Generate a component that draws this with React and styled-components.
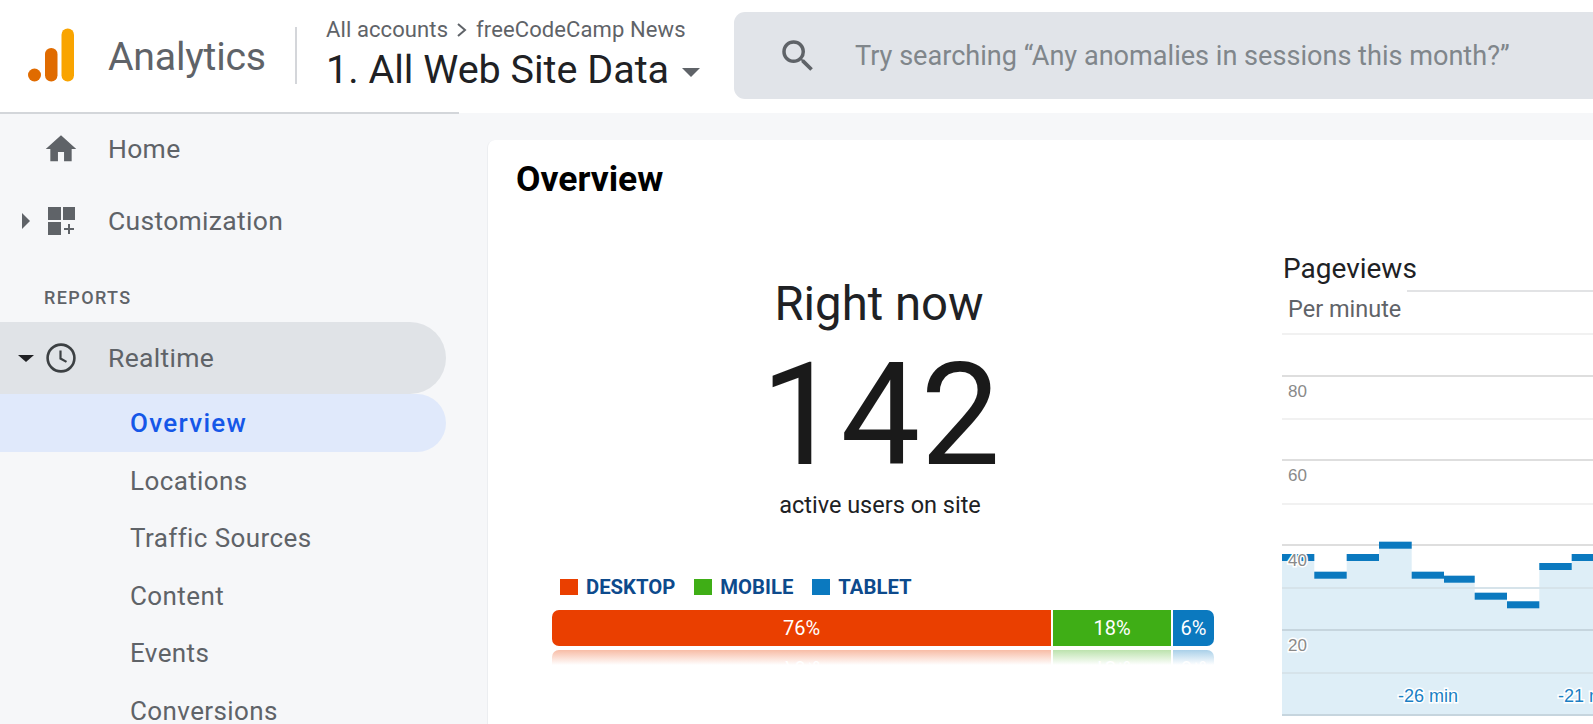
import React from 'react';
import styled, { createGlobalStyle } from 'styled-components';

const GlobalStyle = createGlobalStyle`
  html, body { margin: 0; padding: 0; height: 100%; background: #f6f7f9; }
  body { font-family: Roboto, "Liberation Sans", sans-serif; overflow: hidden; }
`;

const Page = styled.div`
  width: 1593px;
  height: 724px;
  overflow: hidden;
  display: flex;
  flex-direction: column;
`;

const Header = styled.header`
  height: 113px;
  flex: none;
  background: #fff;
  display: flex;
  position: relative;
`;

const HeaderRule = styled.div`
  position: absolute;
  left: 0;
  bottom: -1px;
  width: 459px;
  height: 2px;
  background: #d3d6da;
`;

const LogoBox = styled.div`
  width: 108px;
  flex: none;
  padding: 28px 0 0 28px;
  box-sizing: border-box;
`;

const Brand = styled.div`
  width: 187px;
  flex: none;
  height: 57px;
  margin-top: 27px;
  border-right: 2px solid #d4d6da;
  color: #5f6368;
  font-size: 39.2px;
  line-height: 60px;
  letter-spacing: -0.2px;
`;

const Account = styled.div`
  width: 437px;
  flex: none;
  padding: 16px 0 0 29px;
  box-sizing: border-box;
`;

const Crumbs = styled.div`
  display: flex;
  align-items: center;
  gap: 8px;
  color: #5f6368;
  font-size: 22px;
  line-height: 28px;
  letter-spacing: 0.1px;
`;

const ViewName = styled.div`
  display: flex;
  align-items: center;
  gap: 13px;
  color: #202124;
  font-size: 39.5px;
  line-height: 50px;
  margin-top: 1px;
`;

const Caret = styled.span`
  width: 0;
  height: 0;
  border-left: 9px solid transparent;
  border-right: 9px solid transparent;
  border-top: 9px solid #5f6368;
  margin-top: 4px;
`;

const Search = styled.div`
  flex: 1;
  height: 87px;
  margin-top: 12px;
  background: #e1e4e9;
  border-radius: 11px 0 0 11px;
  display: flex;
  align-items: center;
  padding-left: 43px;
  gap: 36px;
  color: #80868b;
  font-size: 27.1px;
  white-space: nowrap;
`;

const Body = styled.div`
  flex: 1;
  display: flex;
  min-height: 0;
`;

const Sidebar = styled.nav`
  width: 487px;
  flex: none;
`;

const NavRow = styled.div`
  width: 446px;
  height: 72px;
  padding: 0 0 2px 108px;
  display: flex;
  align-items: center;
  position: relative;
  box-sizing: border-box;
  color: #5f6368;
  font-size: 26.5px;
  font-weight: 400;
  letter-spacing: 0.3px;
  background: ${p => (p.$active ? '#e0e3e7' : 'transparent')};
  border-radius: 0 36px 36px 0;
`;

const NavIcon = styled.span`
  position: absolute;
  left: 45px;
  top: 50%;
  transform: translateY(-50%);
  width: 32px;
  height: 32px;
  display: flex;
`;

const NavArrow = styled.span`
  position: absolute;
  left: ${p => (p.$open ? '18px' : '22px')};
  top: 50%;
  margin-top: ${p => (p.$open ? '-3px' : '-8px')};
  width: 0;
  height: 0;
  ${p => p.$open
    ? 'border-left: 8px solid transparent; border-right: 8px solid transparent; border-top: 7px solid #202124;'
    : 'border-top: 8px solid transparent; border-bottom: 8px solid transparent; border-left: 8px solid #5f6368;'}
`;

const SectionLabel = styled.div`
  height: 65px;
  padding: 27px 0 0 44px;
  box-sizing: border-box;
  color: #5f6368;
  font-size: 18px;
  font-weight: 500;
  line-height: 28px;
  letter-spacing: 1.4px;
`;

const SubRow = styled.div`
  width: 446px;
  height: 57.5px;
  padding: 1px 0 0 130px;
  display: flex;
  align-items: center;
  box-sizing: border-box;
  font-size: 26px;
  font-weight: ${p => (p.$active ? 500 : 400)};
  letter-spacing: ${p => (p.$active ? '1.3px' : '0.4px')};
  color: ${p => (p.$active ? '#1557e8' : '#5f6368')};
  background: ${p => (p.$active ? '#e0e9fb' : 'transparent')};
  border-radius: 0 29px 29px 0;
`;

const Main = styled.main`
  flex: 1;
  min-width: 0;
  padding-top: 27px;
`;

const Card = styled.section`
  height: 100%;
  background: #fff;
  border-left: 1px solid #eceef1;
  border-radius: 8px 0 0 0;
  box-sizing: border-box;
`;

const Title = styled.h1`
  margin: 0;
  padding: 19px 0 0 28px;
  font-size: 35.5px;
  line-height: 40px;
  font-weight: 700;
  color: #000;
`;

const Columns = styled.div`
  display: flex;
`;

const LeftCol = styled.div`
  width: 794px;
  flex: none;
  padding-top: 77px;
  display: flex;
  flex-direction: column;
  align-items: center;
`;

const RightNow = styled.div`
  font-size: 47.3px;
  line-height: 56px;
  color: #202124;
  font-weight: 400;
  margin-left: -12px;
`;

const BigCount = styled.div`
  margin: 19px 0 0 -9px;
  font-size: 142px;
  line-height: 130px;
  font-weight: 400;
  color: #1a1a1a;
`;

const ActiveUsers = styled.div`
  margin: 9px 0 0 -10px;
  font-size: 23.5px;
  line-height: 30px;
  color: #202124;
`;

const Devices = styled.div`
  align-self: flex-start;
  margin: 55px 0 0 64px;
  width: 662px;
`;

const Legend = styled.div`
  display: flex;
  height: 24px;
  padding-left: 8px;
`;

const LegendItem = styled.div`
  display: flex;
  align-items: center;
  gap: 8px;
  margin-right: 19px;
  font-size: 20.3px;
  font-weight: 700;
  color: #0d4a8c;
`;

const Swatch = styled.span`
  width: 18px;
  height: 16px;
  background: ${p => p.$color};
`;

const Bar = styled.div`
  display: flex;
  gap: 2px;
  height: 36px;
  margin-top: 11px;
  border-radius: 7px;
  overflow: hidden;
`;

const Segment = styled.div`
  background: ${p => p.$color};
  color: #fff;
  font-size: 20px;
  display: flex;
  align-items: center;
  justify-content: center;
`;

const Reflection = styled.div`
  display: flex;
  gap: 2px;
  height: 15px;
  margin-top: 4px;
  border-radius: 7px 7px 0 0;
  overflow: hidden;
`;

const MirrorSegment = styled.div`
  background: linear-gradient(${p => p.$color}59, #ffffff);
  overflow: hidden;
`;

const MirrorLabel = styled.div`
  color: #fff;
  font-size: 20px;
  line-height: 36px;
  text-align: center;
  transform: scaleY(-1);
`;

const RightCol = styled.div`
  flex: 1;
  min-width: 0;
  padding-top: 54px;
`;

const ChartHead = styled.div`
  display: flex;
  height: 39px;
`;

const ChartTitle = styled.div`
  font-size: 28px;
  line-height: 32px;
  color: #202124;
  padding-left: 1px;
`;

const ChartRule = styled.div`
  flex: 1;
  align-self: flex-end;
  height: 2px;
  margin-left: -10px;
  background: #e2e3e5;
`;

const ChartSub = styled.div`
  margin-top: 4px;
  padding-left: 6px;
  font-size: 23.5px;
  line-height: 26px;
  color: #5f6368;
`;

const ChartSvg = styled.svg`
  display: block;
  margin-top: 11px;
`;

const AxisLabel = styled.text`
  font-family: "Liberation Sans", Arial, sans-serif;
  font-size: ${p => (p.$time ? '18px' : '17px')};
  fill: ${p => (p.$time ? '#1b7fc4' : '#8a8a8a')};
  paint-order: stroke;
  stroke: ${p => (p.$halo ? '#ffffff' : 'none')};
  stroke-width: ${p => (p.$halo ? '3px' : '0')};
`;

const Logo = () => (
  <svg width="46" height="54" viewBox="0 0 46 54">
    <rect x="33.5" y="0.5" width="12.5" height="53" rx="6.2" fill="#f9a400" />
    <rect x="17" y="20" width="12.5" height="33.5" rx="6.2" fill="#e06b00" />
    <circle cx="6.5" cy="47" r="6.5" fill="#e06b00" />
  </svg>
);

const SearchIcon = () => (
  <svg width="42" height="42" viewBox="0 0 24 24" fill="#5f6368">
    <path d="M15.5 14h-.79l-.28-.27A6.47 6.47 0 0 0 16 9.5 6.5 6.5 0 1 0 9.5 16c1.61 0 3.09-.59 4.23-1.57l.27.28v.79l5 4.99L20.49 19l-4.99-5zm-6 0C7.01 14 5 11.99 5 9.5S7.01 5 9.5 5 14 7.01 14 9.5 11.99 14 9.5 14z" />
  </svg>
);

const HomeIcon = () => (
  <svg width="32" height="32" viewBox="1.5 2 21 20" fill="#5f6368">
    <path d="M10 20v-6h4v6h5v-8h3L12 3 2 12h3v8z" />
  </svg>
);

const CustomizeIcon = () => (
  <svg width="32" height="32" viewBox="0 0 32 32" fill="#5f6368">
    <rect x="3" y="2" width="13" height="13" />
    <rect x="18" y="2" width="12" height="13" />
    <rect x="3" y="17" width="13" height="13" />
    <path d="M23 19h2v4h4v2h-4v4h-2v-4h-4v-2h4z" />
  </svg>
);

const ClockIcon = () => (
  <svg width="32" height="32" viewBox="0 0 32 32" fill="none" stroke="#3c4043" strokeWidth="2.6">
    <circle cx="16" cy="16" r="13.4" />
    <path d="M15.5 8.5v8l6 3.4" strokeWidth="2.2" />
  </svg>
);

const Chevron = () => (
  <svg width="12" height="18" viewBox="0 0 12 18" fill="none" stroke="#5f6368" strokeWidth="2">
    <path d="M2 3l7 6-7 6" />
  </svg>
);

const subItems = ['Overview', 'Locations', 'Traffic Sources', 'Content', 'Events', 'Conversions'];

const devices = [
  { name: 'DESKTOP', short: '76%', color: '#ea3f00', width: 499 },
  { name: 'MOBILE', short: '18%', color: '#3fae16', width: 118 },
  { name: 'TABLET', short: '6%', color: '#0b79bf', width: 41 },
];

// chart is drawn in page coordinates shifted by this offset
const OFF = 333;
const LEFT = 1282;
const steps = [
  [1282, 554], [1314.3, 571.7], [1346.7, 554], [1379, 541.7], [1411.7, 571.7],
  [1444, 575.7], [1474.7, 592.7], [1507, 601.3], [1539.3, 563], [1571.7, 554],
];
const END = 1593;
const BOTTOM = 715;

const areaPath = () => {
  let d = `M0 ${BOTTOM - OFF}`;
  steps.forEach(([x, y], i) => {
    const next = i + 1 < steps.length ? steps[i + 1][0] : END;
    d += ` L${x - LEFT} ${y - OFF} L${next - LEFT} ${y - OFF}`;
  });
  return `${d} L${END - LEFT} ${BOTTOM - OFF} Z`;
};

const gridLines = [
  [334, '#f1f1f1'], [376, '#dedede'], [419, '#f1f1f1'], [460, '#dedede'], [504, '#f1f1f1'],
  [545, '#dedede'], [588, '#d6e3ea'], [630, '#c6d5de'], [673, '#d6e3ea'], [715, '#c6d5de'],
];

const yLabels = [
  ['80', 397, false], ['60', 481, false], ['40', 566, true], ['20', 651, true],
];

const PageviewsChart = () => (
  <ChartSvg width="311" height="391" viewBox="0 0 311 391">
    <path d={areaPath()} fill="#deeef7" />
    {gridLines.map(([y, color]) => (
      <rect key={y} x="0" y={y - OFF - 1} width="311" height="2" fill={color} />
    ))}
    {steps.map(([x, y], i) => {
      const next = i + 1 < steps.length ? steps[i + 1][0] : END;
      return <rect key={x} x={x - LEFT} y={y - OFF} width={next - x} height="7" fill="#0b79bf" />;
    })}
    {yLabels.map(([text, y, halo]) => (
      <AxisLabel key={text} x="6" y={y - OFF} $halo={halo}>{text}</AxisLabel>
    ))}
    <AxisLabel x={1398 - LEFT} y={702 - OFF} $time $halo>-26 min</AxisLabel>
    <AxisLabel x={1558 - LEFT} y={702 - OFF} $time $halo>-21 min</AxisLabel>
  </ChartSvg>
);

const App = () => (
  <Page>
    <GlobalStyle />
    <Header>
      <LogoBox><Logo /></LogoBox>
      <Brand>Analytics</Brand>
      <Account>
        <Crumbs>All accounts <Chevron /> freeCodeCamp News</Crumbs>
        <ViewName>1. All Web Site Data <Caret /></ViewName>
      </Account>
      <Search>
        <SearchIcon />
        Try searching “Any anomalies in sessions this month?”
      </Search>
      <HeaderRule />
    </Header>
    <Body>
      <Sidebar>
        <NavRow>
          <NavIcon><HomeIcon /></NavIcon>
          Home
        </NavRow>
        <NavRow>
          <NavArrow />
          <NavIcon><CustomizeIcon /></NavIcon>
          Customization
        </NavRow>
        <SectionLabel>REPORTS</SectionLabel>
        <NavRow $active>
          <NavArrow $open />
          <NavIcon><ClockIcon /></NavIcon>
          Realtime
        </NavRow>
        {subItems.map((item, i) => (
          <SubRow key={item} $active={i === 0}>{item}</SubRow>
        ))}
      </Sidebar>
      <Main>
        <Card>
          <Title>Overview</Title>
          <Columns>
            <LeftCol>
              <RightNow>Right now</RightNow>
              <BigCount>142</BigCount>
              <ActiveUsers>active users on site</ActiveUsers>
              <Devices>
                <Legend>
                  {devices.map(d => (
                    <LegendItem key={d.name}>
                      <Swatch $color={d.color} />
                      {d.name}
                    </LegendItem>
                  ))}
                </Legend>
                <Bar>
                  {devices.map(d => (
                    <Segment key={d.name} $color={d.color} style={{ width: d.width }}>{d.short}</Segment>
                  ))}
                </Bar>
                <Reflection>
                  {devices.map(d => (
                    <MirrorSegment key={d.name} $color={d.color} style={{ width: d.width }}>
                      <MirrorLabel aria-hidden="true">{d.short}</MirrorLabel>
                    </MirrorSegment>
                  ))}
                </Reflection>
              </Devices>
            </LeftCol>
            <RightCol>
              <ChartHead>
                <ChartTitle>Pageviews</ChartTitle>
                <ChartRule />
              </ChartHead>
              <ChartSub>Per minute</ChartSub>
              <PageviewsChart />
            </RightCol>
          </Columns>
        </Card>
      </Main>
    </Body>
  </Page>
);

export default App;
